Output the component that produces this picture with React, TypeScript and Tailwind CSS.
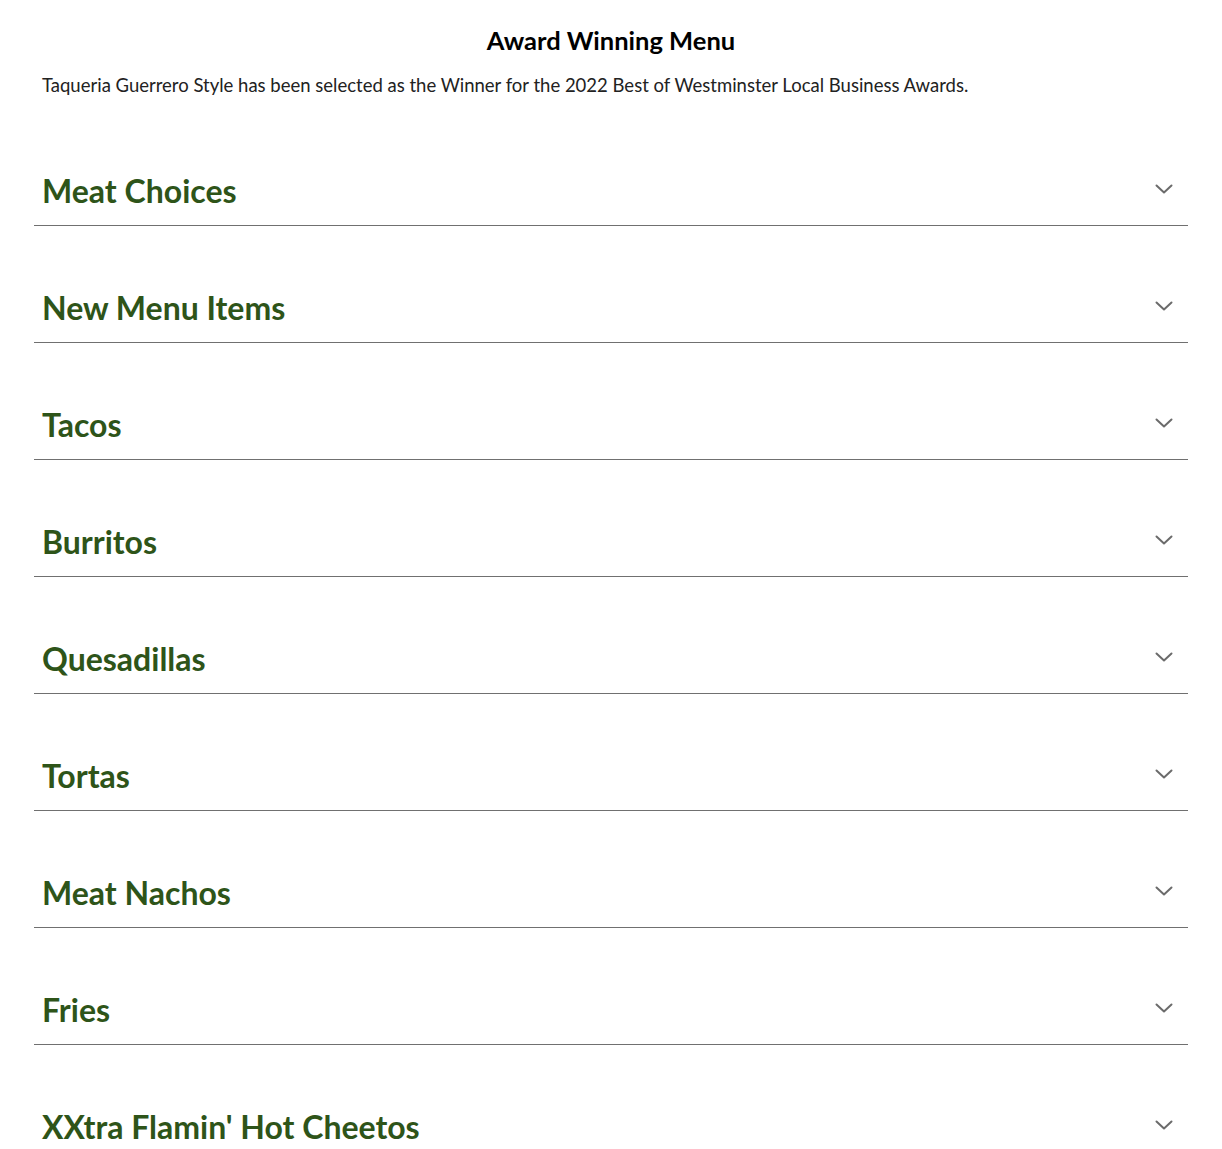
import { useState } from "react";

const sections = [
  "Meat Choices",
  "New Menu Items",
  "Tacos",
  "Burritos",
  "Quesadillas",
  "Tortas",
  "Meat Nachos",
  "Fries",
  "XXtra Flamin' Hot Cheetos",
];

function Chevron({ open }: { open: boolean }) {
  return (
    <svg
      width="18"
      height="10"
      viewBox="0 0 18 10"
      fill="none"
      stroke="#6b6b6b"
      strokeWidth="2"
      strokeLinecap="round"
      strokeLinejoin="round"
      className={open ? "rotate-180" : ""}
    >
      <path d="M1.5 1.5 9 8.5l7.5-7" />
    </svg>
  );
}

export default function App() {
  const [open, setOpen] = useState<string | null>(null);

  return (
    <div className="min-h-screen bg-white font-['Lato','Liberation_Sans',sans-serif] text-[#222]">
      <div className="mx-[34px] pt-[24px]">
        <h2 className="text-center text-[25.5px] font-bold leading-[32px] text-black">
          Award Winning Menu
        </h2>
        <p className="mt-[17px] px-2 text-[18.5px] leading-[24px] text-[#222]">
          Taqueria Guerrero Style has been selected as the Winner for the 2022 Best of Westminster
          Local Business Awards.
        </p>

        <div className="mt-[12px]">
          {sections.map((name) => (
            <div key={name} className="border-b border-[#707070] pt-[64px]">
              <button
                type="button"
                onClick={() => setOpen(open === name ? null : name)}
                className="flex w-full items-center justify-between pb-[17px] pl-2 pr-[15px] text-left"
              >
                <span className="text-[32px] font-bold leading-[35px] text-[#2e5419]">{name}</span>
                <span className="-mt-[3px]">
                  <Chevron open={open === name} />
                </span>
              </button>
            </div>
          ))}
        </div>
      </div>
    </div>
  );
}
